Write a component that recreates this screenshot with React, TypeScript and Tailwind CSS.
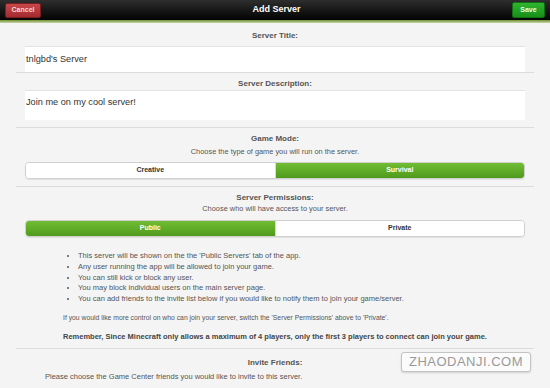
import React from "react";

function Segmented({ left, right, active }: { left: string; right: string; active: "left" | "right" }) {
  const on = "bg-gradient-to-b from-[#72bd34] to-[#4f9a1c] text-white";
  const off = "bg-white text-[#333]";
  return (
    <div className="flex h-[17px] mx-[9px] rounded-[4px] border border-[#cfcfcf] overflow-hidden shadow-[0_1px_1px_rgba(0,0,0,0.08)]">
      <div className={`flex-1 flex items-center justify-center text-[7px] font-bold ${active === "left" ? on : off}`}>{left}</div>
      <div className={`flex-1 flex items-center justify-center text-[7px] font-bold border-l border-[#d8d8d8] ${active === "right" ? on : off}`}>{right}</div>
    </div>
  );
}

export default function App() {
  return (
    <div
      className="relative w-[550px] h-[388px] overflow-hidden bg-[#f4f4f4]"
      style={{ fontFamily: '"Liberation Sans", Arial, sans-serif' }}
    >
      {/* Header */}
      <div className="h-[20px] bg-gradient-to-b from-[#2e2e2e] to-[#050505] flex items-center justify-between px-[5px]">
        <div className="h-[15px] w-[36px] rounded-[2px] bg-gradient-to-b from-[#c9474b] to-[#a52a30] border border-[#7a1e22] flex items-center justify-center text-[7px] font-bold text-[#f6dada]">
          Cancel
        </div>
        <div className="text-white font-bold text-[9px]">Add Server</div>
        <div className="h-[16px] w-[33px] rounded-[2px] bg-gradient-to-b from-[#2fb52f] to-[#178f17] border border-[#0f6e0f] flex items-center justify-center text-[7px] font-bold text-[#e6ffe6]">
          Save
        </div>
      </div>
      <div className="h-[3px] bg-gradient-to-b from-[#6f8f2e] to-[#c9d7a8]" />

      <div className="px-[16px]">
        {/* Server Title */}
        <div className="pt-[8px] border-b border-[#dcdcdc]">
          <div className="h-[10px] leading-[10px] text-center text-[8px] font-bold text-[#555]">Server Title:</div>
          <div className="mt-[5px] mx-[9px] h-[26px] bg-white border-t border-[#e2e2e2] flex items-center px-[1px] text-[9.2px] text-[#333]">
            tnlgbd's Server
          </div>
        </div>

        {/* Server Description */}
        <div className="pt-[6px] pb-[7px] border-b border-[#dcdcdc]">
          <div className="h-[10px] leading-[10px] text-center text-[8px] font-bold text-[#555]">Server Description:</div>
          <div className="mt-[1px] mx-[9px] h-[30px] bg-white border-t border-[#e2e2e2] px-[1px] pt-[6px] text-[9.2px] leading-[10px] text-[#333]">
            Join me on my cool server!
          </div>
        </div>

        {/* Game Mode */}
        <div className="pt-[6px] pb-[7px] border-b border-[#dcdcdc]">
          <div className="h-[10px] leading-[10px] text-center text-[8px] font-bold text-[#555]">Game Mode:</div>
          <div className="mt-[3px] h-[10px] leading-[10px] text-center text-[7.4px] text-[#555]">
            Choose the type of game you will run on the server.
          </div>
          <div className="mt-[5px]">
            <Segmented left="Creative" right="Survival" active="right" />
          </div>
        </div>

        {/* Server Permissions */}
        <div className="pt-[6px] pb-[6px] border-b border-[#dcdcdc]">
          <div className="h-[10px] leading-[10px] text-center text-[8px] font-bold text-[#555]">Server Permissions:</div>
          <div className="mt-[1px] h-[10px] leading-[10px] text-center text-[7.4px] text-[#555]">
            Choose who will have access to your server.
          </div>
          <div className="mt-[6px]">
            <Segmented left="Public" right="Private" active="left" />
          </div>
          <ul className="mt-[14px] pl-[62px] list-disc text-[7.5px] leading-[10.75px] text-[#555]">
            <li>This server will be shown on the the 'Public Servers' tab of the app.</li>
            <li>Any user running the app will be allowed to join your game.</li>
            <li>You can still kick or block any user.</li>
            <li>You may block individual users on the main server page.</li>
            <li>You can add friends to the invite list below if you would like to notify them to join your game/server.</li>
          </ul>
          <div className="mt-[8px] pl-[47px] h-[10px] leading-[10px] text-[6.8px] text-[#555] whitespace-nowrap">
            If you would like more control on who can join your server, switch the 'Server Permissions' above to 'Private'.
          </div>
          <div className="mt-[9px] pl-[47px] h-[10px] leading-[10px] text-[7.5px] font-bold text-[#444] whitespace-nowrap">
            Remember, Since Minecraft only allows a maximum of 4 players, only the first 3 players to connect can join your game.
          </div>
        </div>

        {/* Invite Friends */}
        <div className="pt-[9px]">
          <div className="h-[10px] leading-[10px] text-center text-[8px] font-bold text-[#555]">Invite Friends:</div>
          <div className="mt-[4px] pl-[29px] h-[10px] leading-[10px] text-[7.5px] text-[#555]">
            Please choose the Game Center friends you would like to invite to this server.
          </div>
        </div>
      </div>

      {/* Watermark */}
      <div className="absolute left-[401px] top-[352px] w-[130px] h-[20px] rounded-[3px] border border-[#c4c4c4] bg-[#fbfbfb] shadow-[0_1px_2px_rgba(0,0,0,0.15)] flex items-center justify-center text-[13px] tracking-[0.5px] text-[#9a9a9a]">
        ZHAODANJI.COM
      </div>
    </div>
  );
}
